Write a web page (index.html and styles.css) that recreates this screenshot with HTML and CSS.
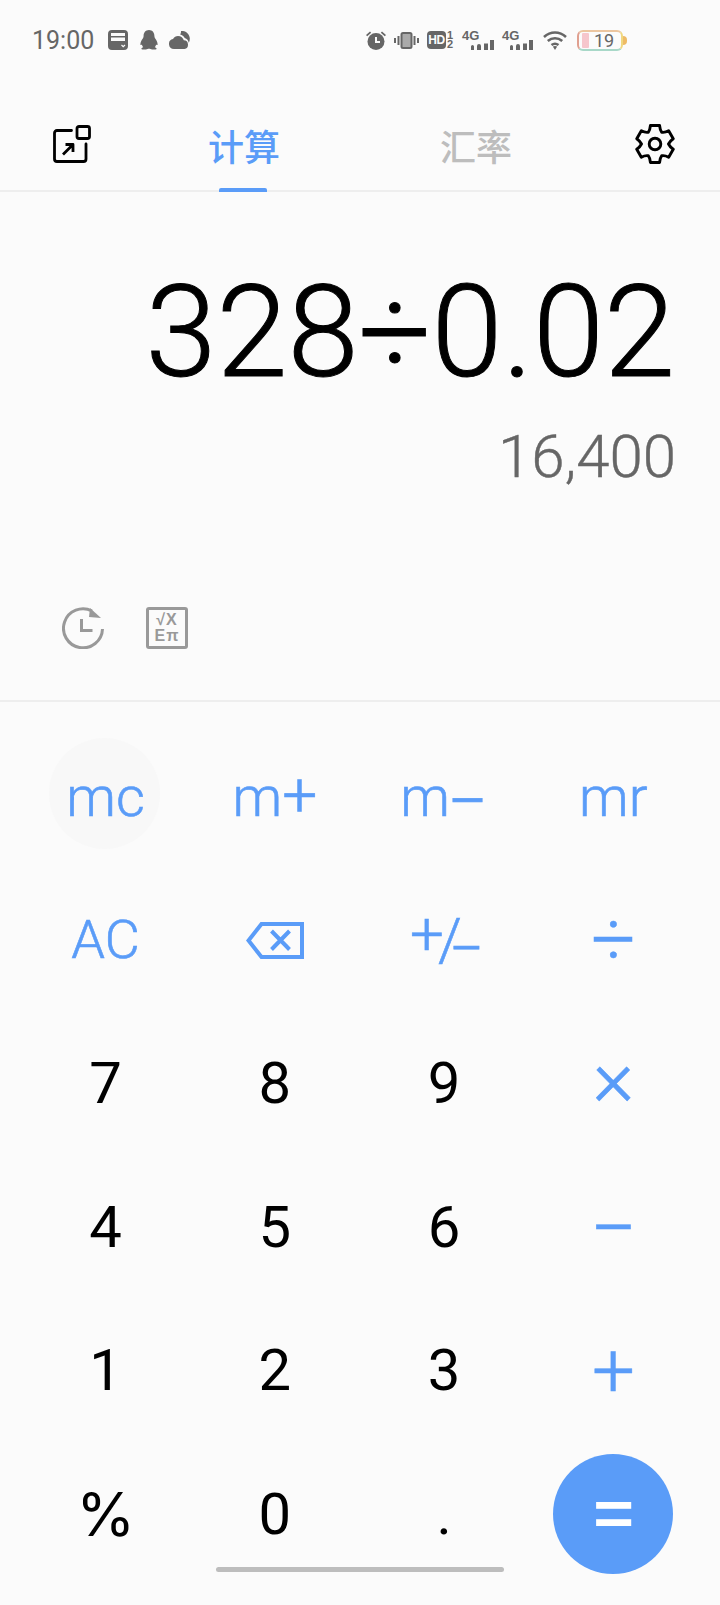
FILE: index.html
```html
<!DOCTYPE html>
<html lang="zh">
<head>
<meta charset="utf-8">
<title>计算器</title>
<link rel="stylesheet" href="styles.css">
</head>
<body>
<main class="screen">
  <header class="status">
    <div class="status-left">
      <span class="time">19:00</span>
      <svg class="ic-card" width="20" height="20" viewBox="0 0 20 20"><path fill-rule="evenodd" d="M4 0h12a4 4 0 0 1 4 4v12a4 4 0 0 1-4 4H4a4 4 0 0 1-4-4V4a4 4 0 0 1 4-4zM3 3v3h14V3zM3 7.500v3.500h14V7.500z"/><path d="M13.500 15l1.700 1.700L17 15" fill="none" stroke="#fbfbfb" stroke-width="1.200"/></svg>
      <svg class="ic-qq" width="18" height="20" viewBox="0 0 18 20"><path d="M9 0c3.600 0 5.400 2.800 5.400 6 0 1 .2 1.600.8 2.400 1.200 1.700 2.400 4 2.400 5.800 0 1-.5 1.300-1.500.3-.2 1.100-.6 2-1.300 2.700 1 .4 1.800.9 1.800 1.500 0 .7-1.700.9-3.400.9-1.500 0-2.800-.3-3.300-.8H8.100c-.5.500-1.800.8-3.300.8-1.700 0-3.400-.2-3.400-.9 0-.6.800-1.100 1.800-1.500-.7-.7-1.100-1.600-1.300-2.700-1 1-1.500.7-1.500-.3 0-1.800 1.200-4.100 2.400-5.800.6-.8.800-1.400.8-2.400C3.600 2.800 5.400 0 9 0z"/></svg>
      <svg class="ic-cloud" width="21" height="18" viewBox="0 0 21 18"><path d="M12 0c4.500-.6 8.500 3 8.800 7.200.1 1.700-.3 3.300-1.100 4.600-.2-2.300-1.700-4.200-4-4.800-.9-1.900-2.500-3.200-4.600-3.600.6-.6 1-1.500.9-3.400z"/><path d="M5 18a5 5 0 0 1-1-9.900C5 6 7 5 9 5c3 0 5.200 2 5.800 4.300A4.400 4.400 0 0 1 15.500 18z"/></svg>
    </div>
    <div class="status-right">
      <svg class="ic-alarm" width="20" height="19" viewBox="0 0 20 19"><circle cx="10" cy="10.500" r="8.500"/><path d="M0 4 4 .5l1.200 1.300-4 3.500zM20 4 16 .5l-1.200 1.300 4 3.500z"/><path d="M10 6v5h4" fill="none" stroke="#fbfbfb" stroke-width="2"/></svg>
      <svg class="ic-vib" width="25" height="17" viewBox="0 0 25 17"><path fill="none" stroke="#666" stroke-width="2" d="M1 6v5M4.500 4v9M20.500 4v9M24 6v5"/><rect x="7.500" y="1" width="10" height="15" rx="1.500" fill="#aaa" stroke="#666" stroke-width="2"/></svg>
      <span class="hd"><b class="hd-box">HD</b><span class="hd-sims"><i>1</i><i>2</i></span></span>
      <span class="net"><b class="net-label">4G</b><svg class="bars" width="23" height="10" viewBox="0 0 23 10"><path d="M0 6.500a1.500 1.500 0 0 1 3 0V10H0zM6 6a2 2 0 0 1 4 0v4H6zM13 3.500h4V10h-4zM19 0h4v10h-4z"/></svg></span>
      <span class="net"><b class="net-label">4G</b><svg class="bars" width="23" height="10" viewBox="0 0 23 10"><path d="M0 6.500a1.500 1.500 0 0 1 3 0V10H0zM6 6a2 2 0 0 1 4 0v4H6zM13 3.500h4V10h-4zM19 0h4v10h-4z"/></svg></span>
      <svg class="ic-wifi" width="24" height="19" viewBox="0 0 24 19"><g fill="none" stroke="#666" stroke-width="2.600"><path d="M1 6C7.500 0 16.500 0 23 6"/><path d="M4.800 10c4.300-3.700 10.100-3.700 14.400 0"/><path d="M8.500 14c2.200-1.600 4.800-1.600 7 0"/></g><path d="M9.800 15.600c1.400-.8 3-.8 4.400 0L12 19z"/></svg>
      <span class="battery"><span class="batt-fill"></span><span class="batt-num">19</span></span>
    </div>
  </header>

  <nav class="tabs">
    <svg class="tab-icon tab-link" width="38" height="38" viewBox="0 0 38 38"><g fill="none" stroke="#000" stroke-width="2.800" stroke-linejoin="round" stroke-linecap="round"><rect x="24" y="1.500" width="12.500" height="12" rx="2"/><path d="M18.500 5.500H4a2.500 2.500 0 0 0-2.500 2.500V34A2.500 2.500 0 0 0 4 36.500h26.500A2.500 2.500 0 0 0 33 34V19"/><path d="M10 29.500 20 19.500M12.500 19.500H20V27" stroke-linecap="butt"/></g></svg>
    <div class="tab-group">
      <a class="tab tab-active">计算</a>
      <a class="tab">汇率</a>
    </div>
    <svg class="tab-icon" width="40" height="40" viewBox="0 0 40 40"><path fill="none" stroke="#000" stroke-width="2.900" stroke-linejoin="round" d="M15.400 1.560H24.600Q25 6 26.750 8.300 Q30 8.800 33.670 6.800L38.260 14.760Q35 17 33.500 20Q35 23 38.260 25.240L33.670 33.200Q30 31.200 26.750 31.700Q25 34 24.600 38.440H15.400Q15 34 13.250 31.700Q10 31.200 6.330 33.200L1.740 25.240Q5 23 6.500 20Q5 17 1.740 14.760L6.330 6.800Q10 8.800 13.250 8.300Q15 6 15.400 1.560Z"/><circle cx="20" cy="20" r="5.800" fill="none" stroke="#000" stroke-width="2.900"/></svg>
  </nav>

  <section class="display">
    <div class="expression">328÷0.02</div>
    <div class="result">16,400</div>
    <div class="tools">
      <svg width="42" height="42" viewBox="0 0 42 42"><g fill="none" stroke="#999" stroke-width="3"><path d="M40.500 22A19.500 19.500 0 1 1 30 4"/><path d="M19.500 12v11.500h11"/></g><path d="M28 1l11 10-12-1z" fill="#999"/></svg>
      <span class="formula"><span>√X</span><span>Eπ</span></span>
    </div>
  </section>

  <section class="keypad">
    <button class="key op key-pressed">mc</button>
    <button class="key op"><span class="key-line">m<span class="m-plus">+</span></span></button>
    <button class="key op"><span class="key-line">m<span class="m-minus">−</span></span></button>
    <button class="key op">mr</button>
    <button class="key op key-ac">AC</button>
    <button class="key op" aria-label="退格"><svg width="58" height="37" viewBox="0 0 58 37"><g fill="none" stroke="#5a9cf8" stroke-width="4"><path d="M56 2H15.500L2.500 18.500 15.500 35H56z"/><path d="M25.500 9 43.500 27.500M43.500 9 25.500 27.500"/></g></svg></button>
    <button class="key op"><span class="sign"><span class="sign-plus">+</span>/<span class="sign-minus">−</span></span></button>
    <button class="key op op-big op-div">÷</button>
    <button class="key">7</button>
    <button class="key">8</button>
    <button class="key">9</button>
    <button class="key op op-big op-times">×</button>
    <button class="key">4</button>
    <button class="key">5</button>
    <button class="key">6</button>
    <button class="key op op-big op-minus">−</button>
    <button class="key">1</button>
    <button class="key">2</button>
    <button class="key">3</button>
    <button class="key op op-big op-plus">+</button>
    <button class="key key-pct">%</button>
    <button class="key">0</button>
    <button class="key">.</button>
    <button class="key key-eq"><span class="eq-circle">=</span></button>
  </section>
  <div class="home"><span class="home-bar"></span></div>
</main>
</body>
</html>
```

FILE: styles.css
```css
* { box-sizing: border-box; }
html, body { margin: 0; padding: 0; background: #fbfbfb; }
body { font-family: Roboto, "Noto Sans CJK SC", sans-serif; }
.screen { width: 720px; height: 1605px; overflow: hidden; display: flex; flex-direction: column; }

.status { height: 80px; padding: 0 93px 0 32px; display: flex; justify-content: space-between; align-items: center; color: #666; fill: #666; }
.status-left, .status-right { display: flex; align-items: center; }
.time { font-size: 25px; line-height: 30px; width: 61px; margin: 2px 15px 0 0; }
.ic-qq { margin-left: 12px; }
.ic-cloud { margin-left: 11px; }
.status-right { gap: 8px; }
.hd { display: flex; align-items: center; gap: 1px; width: 27px; }
.hd-box { background: #666; color: #fbfbfb; border-radius: 4px; flex: none; width: 19px; height: 18px; font: 700 12px/18px "Liberation Sans", sans-serif; text-align: center; letter-spacing: -.5px; }
.hd-sims { display: flex; flex-direction: column; font: 700 11px/9px "Liberation Sans", sans-serif; }
.hd-sims i { font-style: normal; }
.net { position: relative; width: 32px; height: 20px; }
.net + .net { width: 31px; }
.net-label { position: absolute; left: 0; top: 0; font: 700 13px/12px "Liberation Sans", sans-serif; }
.bars { position: absolute; right: 0; bottom: 0; }
.ic-wifi { margin: 0 2px; }
.battery { position: relative; width: 46px; height: 21px; border: 2px solid; border-color: #ecc6a0 #f0d880 #a8d8c8 #e0a090; border-radius: 6px; display: flex; align-items: center; padding-left: 3px; margin-right: 4px; }
.battery::after { content: ""; position: absolute; right: -6px; top: 4px; width: 4px; height: 9px; background: #eebb66; border-radius: 0 4px 4px 0; }
.batt-fill { width: 7px; height: 15px; background: #f6c6cc; border-radius: 1px; }
.batt-num { font-size: 18px; line-height: 17px; margin-left: 5px; color: #666; }

.tabs { height: 112px; padding: 44px 45px 0 53px; border-bottom: 2px solid #eeeeee; display: flex; justify-content: space-between; align-items: flex-start; }
.tab-link { margin-top: 1px; }
.tab-group { display: flex; gap: 162px; margin-right: 8px; }
.tab { position: relative; display: block; width: 70px; height: 68px; padding-top: 4px; font-size: 36px; line-height: 42px; font-weight: 500; color: #bdbdbd; text-align: center; white-space: nowrap; }
.tab-active { color: #5a9cf8; }
.tab-active::after { content: ""; position: absolute; left: 11px; bottom: 0; width: 48px; height: 4px; background: #5a9cf8; border-radius: 2px 2px 0 0; }

.display { height: 510px; border-bottom: 2px solid #eeeeee; padding: 65px 45px 0 62px; display: flex; flex-direction: column; align-items: stretch; }
.expression { font-size: 128px; line-height: 150px; font-weight: 300; -webkit-text-stroke: 1px #000; color: #000; text-align: right; white-space: nowrap; }
.result { font-size: 60px; line-height: 72px; font-weight: 300; -webkit-text-stroke: .4px #666; color: #666; text-align: right; margin: 14px -1px 0 0; }
.tools { margin-top: 114px; display: flex; gap: 42px; align-items: center; }
.formula { width: 42px; height: 42px; border: 3px solid #999; border-radius: 3px; display: flex; flex-direction: column; align-items: center; justify-content: center; font: 700 16px/16px "Liberation Sans", sans-serif; letter-spacing: 1px; color: #999; }

.keypad { flex: none; height: 861px; padding: 23px 22px 0 21px; display: grid; grid-template-columns: repeat(4, 1fr); grid-auto-rows: 143.400px; }
.key { appearance: none; border: 0; background: none; padding: 0; margin: 0; display: flex; align-items: center; justify-content: center; font-family: Roboto, sans-serif; font-size: 58px; line-height: 1; font-weight: 400; color: #000; }
.op { color: #5a9cf8; font-size: 56px; font-weight: 300; -webkit-text-stroke: .6px #5a9cf8; }
.key-line { line-height: 56px; }
.m-plus { font-size: 62px; line-height: 0; }
.m-minus { font-size: 72px; line-height: 0; vertical-align: -10px; margin-left: -3px; }
.op-big { -webkit-text-stroke: .5px #5a9cf8; }
.op-div { font-size: 78px; }
.op-times { font-size: 80px; padding-bottom: 11px; }
.op-minus { font-size: 84px; padding-top: 4px; }
.op-plus { font-size: 76px; }
.key-pressed { position: relative; z-index: 0; }
.key-pressed::before { content: ""; position: absolute; z-index: -1; left: 28px; top: 13px; width: 111px; height: 111px; border-radius: 50%; background: #f8f8f8; }
.key-ac { font-size: 54px; }
.sign { font-size: 60px; line-height: 60px; letter-spacing: -6px; }
.sign-plus { font-size: 60px; line-height: 0; vertical-align: 6px; }
.sign-minus { font-size: 62px; line-height: 0; vertical-align: -10px; margin-left: -7px; }
.key-pct { font-family: Inter, sans-serif; font-size: 60px; }
.eq-circle { width: 120px; height: 120px; border-radius: 50%; background: #5a9cf8; color: #fff; font-size: 86px; font-weight: 400; display: flex; align-items: center; justify-content: center; }

.home { flex: none; padding-top: 4px; display: flex; justify-content: center; }
.home-bar { width: 288px; height: 5px; background: #bdbdbd; border-radius: 3px; }
```
